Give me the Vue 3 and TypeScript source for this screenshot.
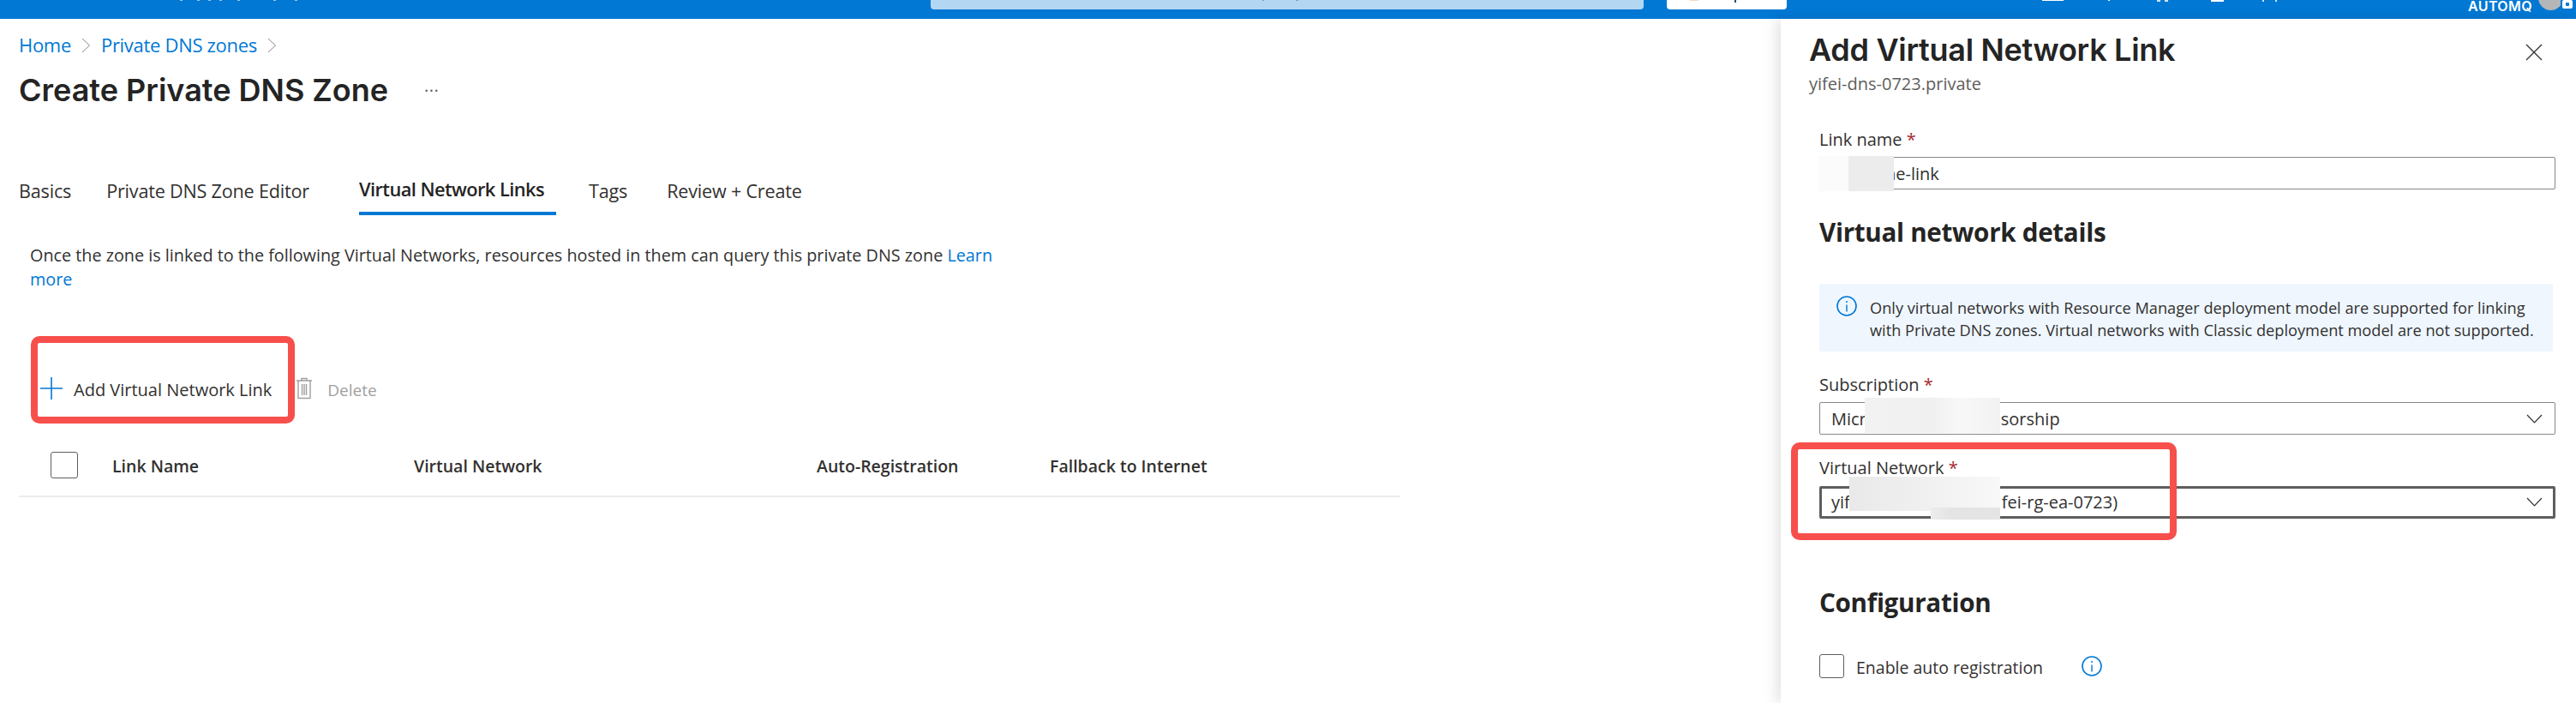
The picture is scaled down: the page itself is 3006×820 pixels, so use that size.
<script setup lang="ts">
const ticks = [
  { x: 210, w: 3, h: 1, c: '#9cc8ea' },
  { x: 230, w: 3, h: 1, c: '#9cc8ea' },
  { x: 243, w: 3, h: 1, c: '#9cc8ea' },
  { x: 256, w: 3, h: 1, c: '#9cc8ea' },
  { x: 277, w: 3, h: 1, c: '#9cc8ea' },
  { x: 319, w: 3, h: 1, c: '#9cc8ea' },
  { x: 344, w: 3, h: 1, c: '#9cc8ea' },
  { x: 2383, w: 25, h: 1, c: '#ffffff' },
  { x: 2460, w: 2, h: 1, c: '#ffffff' },
  { x: 2517, w: 4, h: 2, c: '#cfe4f6' },
  { x: 2526, w: 4, h: 2, c: '#cfe4f6' },
  { x: 2580, w: 15, h: 2, c: '#ffffff' },
  { x: 2640, w: 2, h: 2, c: '#cfe4f6' },
  { x: 2655, w: 2, h: 2, c: '#cfe4f6' }
]
const overlayTicks = [
  { x: 1473, w: 2, h: 1, c: '#7f9fc4' },
  { x: 1512, w: 3, h: 1, c: '#7f9fc4' },
  { x: 1972, w: 10, h: 1, c: '#f8d8c4' },
  { x: 2024, w: 2, h: 3, c: '#2b4f80' }
]
const tabs = ['Basics', 'Private DNS Zone Editor', 'Virtual Network Links', 'Tags', 'Review + Create']
const columns = ['Link Name', 'Virtual Network', 'Auto-Registration', 'Fallback to Internet']
</script>

<template>
  <div class="page">
    <header class="topbar">
      <span v-for="t in ticks" :key="t.x" class="tick" :style="{ left: t.x + 'px', width: t.w + 'px', height: t.h + 'px', background: t.c }"></span>
      <div class="search"></div>
      <div class="copilot"></div>
      <span v-for="t in overlayTicks" :key="t.x" class="tick" :style="{ left: t.x + 'px', width: t.w + 'px', height: t.h + 'px', background: t.c }"></span>
      <div class="account">
        <span class="acct-name">AUTOMQ</span>
        <span class="avatar"></span>
        <span class="lock"></span>
      </div>
    </header>

    <div class="body">
      <main class="main">
        <nav class="crumbs">
          <a>Home</a>
          <svg class="crumb-chev" width="11" height="18" viewBox="0 0 11 18"><path d="M1 1l8.500 8L1 17" fill="none" stroke="#8a8886" /></svg>
          <a>Private DNS zones</a>
          <svg class="crumb-chev" width="11" height="18" viewBox="0 0 11 18"><path d="M1 1l8.500 8L1 17" fill="none" stroke="#8a8886" /></svg>
        </nav>
        <div class="title-row">
          <h1 class="page-title">Create Private DNS Zone</h1>
          <span class="more">···</span>
        </div>
        <div class="tabs">
          <div v-for="(t, i) in tabs" :key="t" class="tab" :class="{ active: i === 2 }">{{ t }}</div>
        </div>
        <p class="intro">Once the zone is linked to the following Virtual Networks, resources hosted in them can query this private DNS zone <a>Learn</a> <a>more</a></p>
        <div class="toolbar">
          <svg class="plus" width="26" height="26" viewBox="0 0 26 26"><path d="M13 0v26M0 13h26" stroke="#0078d4" stroke-width="1.600" /></svg>
          <span class="add">Add Virtual Network Link</span>
          <svg class="trash" width="18" height="26" viewBox="0 0 18 26" fill="none" stroke="#a19f9d" stroke-width="1.400"><path d="M0 4h18M6 4V1.500h6V4M2 4v20.500h14V4M6.500 8v13M9 8v13M11.500 8v13" /></svg>
          <span class="delete">Delete</span>
        </div>
        <div class="thead">
          <span class="checkbox head-check"></span>
          <span class="col c1">{{ columns[0] }}</span>
          <span class="col c2">{{ columns[1] }}</span>
          <span class="col c3">{{ columns[2] }}</span>
          <span class="col c4">{{ columns[3] }}</span>
        </div>
      </main>

      <aside class="panel">
        <div class="panel-head">
          <div>
            <h2 class="panel-title">Add Virtual Network Link</h2>
            <div class="panel-sub">yifei-dns-0723.private</div>
          </div>
          <svg class="close" width="20" height="20" viewBox="0 0 20 20"><path d="M1 1l18 18M19 1L1 19" stroke="#323130" stroke-width="1.300" /></svg>
        </div>

        <div class="form">
          <label class="label first">Link name <em>*</em></label>
          <div class="field plain">ne-link<span class="smudge s-link"></span></div>

          <h3 class="section s-details">Virtual network details</h3>

          <div class="notice">
            <svg class="info" width="24" height="26" viewBox="0 0 24 26"><circle cx="12" cy="13" r="11" fill="none" stroke="#0078d4" stroke-width="1.600" /><path d="M12 11.500v8" stroke="#0078d4" stroke-width="1.400" /><circle cx="12" cy="8" r="1" fill="#0078d4" /></svg>
            <p>Only virtual networks with Resource Manager deployment model are supported for linking with Private DNS zones. Virtual networks with Classic deployment model are not supported.</p>
          </div>

          <label class="label l-sub">Subscription <em>*</em></label>
          <div class="field select">
            <span>Micr</span><span class="gap-a">sorship</span>
            <svg class="chev" width="19" height="11" viewBox="0 0 19 11"><path d="M1 1l8.500 9L18 1" fill="none" stroke="#323130" stroke-width="1.200" /></svg>
            <span class="smudge s-sub"></span>
          </div>

          <label class="label l-vnet">Virtual Network <em>*</em></label>
          <div class="field select focused">
            <span>yif</span><span class="gap-b">fei-rg-ea-0723)</span>
            <svg class="chev" width="19" height="11" viewBox="0 0 19 11"><path d="M1 1l8.500 9L18 1" fill="none" stroke="#323130" stroke-width="1.200" /></svg>
            <span class="smudge s-vnet"></span>
            <span class="smudge s-vnet2"></span>
          </div>

          <h3 class="section s-config">Configuration</h3>

          <div class="check-row">
            <span class="checkbox panel-check"></span>
            <span class="check-label">Enable auto registration</span>
            <svg class="info2" width="24" height="24" viewBox="0 0 24 24"><circle cx="12" cy="12" r="11" fill="none" stroke="#0078d4" stroke-width="1.600" /><path d="M12 10.500v8" stroke="#0078d4" stroke-width="1.400" /><circle cx="12" cy="7" r="1" fill="#0078d4" /></svg>
          </div>
        </div>
      </aside>
    </div>

    <div class="mark mark-add"></div>
    <div class="mark mark-vnet"></div>
  </div>
</template>

<style>
html, body { margin: 0; background: #fff; }
</style>

<style scoped>
.page {
  position: relative;
  width: 3006px;
  height: 820px;
  overflow: hidden;
  background: #fff;
  color: #323130;
  font-family: "Open Sans", "Noto Sans", sans-serif;
  font-size: 20px;
}
.topbar {
  position: relative;
  height: 22px;
  background: #0078d4;
}
.tick {
  position: absolute;
  top: 0;
  z-index: 1;
}
.search {
  position: absolute;
  left: 1086px;
  top: 0;
  width: 832px;
  height: 11px;
  background: #b3d7f2;
  border-radius: 0 0 4px 4px;
}
.copilot {
  position: absolute;
  left: 1945px;
  top: 0;
  width: 140px;
  height: 11px;
  background: #fff;
  border-radius: 0 0 4px 4px;
}
.account {
  position: absolute;
  left: 2880px;
  top: 0;
  height: 22px;
  width: 126px;
}
.acct-name {
  position: absolute;
  left: 0;
  top: 1px;
  font: 600 16px/12px "Inter", sans-serif;
  letter-spacing: 0.400px;
  color: #fff;
}
.avatar {
  position: absolute;
  left: 82px;
  top: -17px;
  width: 29px;
  height: 29px;
  border-radius: 50%;
  background: #b4b6b8;
}
.lock {
  position: absolute;
  left: 110px;
  top: 0;
  width: 12px;
  height: 10px;
  border-radius: 2px;
  background: radial-gradient(circle at 50% 50%, #0078d4 0 2px, #fff 2.500px);
  box-shadow: 0 0 0 2px #0078d4;
}
.body {
  display: flex;
  height: 798px;
}
.main {
  flex: 1;
  min-width: 0;
  padding-left: 22px;
}
.crumbs {
  display: flex;
  align-items: center;
  gap: 12px;
  height: 20px;
  margin-top: 20px;
  line-height: 20px;
  font-size: 22px;
  letter-spacing: -0.300px;
}
.crumbs a { color: #0078d4; }
.crumb-chev { margin: 1px 0 0; }
.title-row {
  display: flex;
  align-items: center;
  height: 40px;
  margin-top: 23px;
}
.page-title {
  margin: 0;
  font: 600 36px/40px "Inter", sans-serif;
  color: #242424;
}
.more {
  margin-left: 42px;
  font-size: 20px;
  color: #605e5c;
  letter-spacing: 0.500px;
}
.tabs {
  display: flex;
  margin-top: 66px;
  height: 93px;
}
.tab {
  height: 60px;
  padding-top: 18px;
  box-sizing: border-box;
  font-size: 21.600px;
  line-height: 28px;
  letter-spacing: -0.200px;
  white-space: nowrap;
}
.tab:nth-child(1) { margin-right: 41px; }
.tab:nth-child(2) { margin-right: 58px; }
.tab:nth-child(3) { margin-right: 38px; }
.tab:nth-child(4) { margin-right: 46px; }
.tab.active {
  border-bottom: 4px solid #0078d4;
  padding-right: 14px;
  padding-top: 16px;
  font-size: 21.800px;
  font-weight: 600;
  color: #242424;
  letter-spacing: -0.550px;
}
.intro {
  width: 1160px;
  margin: 0;
  padding-left: 13px;
  font-size: 19.800px;
  line-height: 28px;
}
.intro a { color: #0078d4; }
.toolbar {
  display: flex;
  align-items: center;
  height: 26px;
  margin-top: 100px;
  padding-left: 25px;
}
.add { margin: 2px 0 0 13px; white-space: nowrap; }
.trash { margin-left: 29px; }
.delete { margin: 3px 0 0 18px; font-size: 19px; color: #a19f9d; }
.thead {
  position: relative;
  height: 51px;
  margin-top: 61px;
  width: 1612px;
  border-bottom: 2px solid #edebe9;
  font-size: 19.500px;
  font-weight: 600;
}
.checkbox {
  display: block;
  box-sizing: border-box;
  border: 1.500px solid #605e5c;
  border-radius: 3px;
  background: #fff;
}
.head-check {
  position: absolute;
  left: 37px;
  top: 0;
  width: 32px;
  height: 31px;
}
.col {
  position: absolute;
  top: 4px;
  line-height: 26px;
  white-space: nowrap;
}
.c1 { left: 109px; }
.c2 { left: 461px; }
.c3 { left: 931px; }
.c4 { left: 1203px; }
.panel {
  position: relative;
  flex: none;
  width: 928px;
  box-shadow: -6px 0 14px rgba(0, 0, 0, 0.1);
  background: #fff;
}
.panel-head {
  display: flex;
  justify-content: space-between;
  padding: 13px 39px 0 33px;
}
.panel-title {
  margin: 0;
  font: 600 36px/46px "Inter", sans-serif;
  letter-spacing: -0.300px;
  color: #242424;
}
.panel-sub {
  margin-top: 4px;
  line-height: 26px;
  color: #605e5c;
}
.close { margin-top: 16px; }
.form {
  padding: 0 24px 0 45px;
}
.label {
  display: block;
  line-height: 24px;
}
.label em {
  font-style: normal;
  color: #a4262c;
}
.label.first { margin-top: 40px; }
.field {
  position: relative;
  display: flex;
  box-sizing: border-box;
  height: 38px;
  border: 1.500px solid #8a8886;
  border-radius: 2px;
  background: #fff;
  line-height: 38px;
  white-space: nowrap;
}
.field.plain {
  margin-top: 8px;
  padding-left: 76px;
}
.select { padding-left: 13px; }
.select > .chev {
  position: absolute;
  right: 14px;
  top: 13px;
}
.focused {
  margin-top: 9px;
  border: 3px solid #605e5c;
  line-height: 32px;
  padding-left: 11px;
}
.focused > .chev { top: 10px; right: 12px; }
.gap-a { margin-left: 157px; }
.gap-b { margin-left: 177px; }
.smudge {
  position: absolute;
  z-index: 2;
}
.s-link {
  left: -2px;
  top: -2px;
  width: 88px;
  height: 41px;
  background: linear-gradient(90deg, #fbfbfb 0 40%, #ececec 40% 100%);
}
.s-sub {
  left: 52px;
  top: -6px;
  width: 158px;
  height: 41px;
  background: linear-gradient(90deg, #f2f2f2, #f0f0f0 50%, #f8f8f8 70%, #f2f2f2);
}
.s-vnet {
  left: 32px;
  top: -14px;
  width: 176px;
  height: 40px;
  background: linear-gradient(90deg, #e9e9e9, #f0f0f0 50%, #f4f4f4 75%, #f8f8f8);
}
.s-vnet2 {
  left: 127px;
  top: 22px;
  width: 81px;
  height: 14px;
  background: linear-gradient(90deg, #ececec, #e4e4e4 30%);
}
.section {
  margin: 0;
  font-weight: 700;
  font-size: 29.600px;
  line-height: 36px;
  letter-spacing: -0.300px;
  color: #242424;
}
.s-details { margin-top: 32px; }
.s-config { margin-top: 80px; }
.notice {
  display: flex;
  margin-top: 42px;
  width: 856px;
  height: 79px;
  padding: 15px 0 0 20px;
  box-sizing: border-box;
  background: #eff6fe;
}
.notice p {
  width: 780px;
  margin: 0;
  padding-left: 15px;
  font-size: 18.200px;
  line-height: 26px;
}
.info { flex: none; margin-top: -2px; }
.l-sub { margin-top: 27px; }
.l-sub + .field { margin-top: 8px; }
.l-vnet { margin-top: 27px; }
.check-row {
  display: flex;
  align-items: center;
  margin-top: 42px;
  height: 28px;
}
.panel-check {
  width: 29px;
  height: 28px;
}
.check-label { margin: 2px 0 0 14px; font-size: 19.500px; }
.info2 { margin-left: 45px; }
.mark {
  position: absolute;
  box-sizing: border-box;
  border: 8px solid #f74f4c;
  border-radius: 10px;
  z-index: 5;
}
.mark-add {
  left: 36px;
  top: 392px;
  width: 308px;
  height: 102px;
}
.mark-vnet {
  left: 2090px;
  top: 516px;
  width: 450px;
  height: 114px;
}
</style>
